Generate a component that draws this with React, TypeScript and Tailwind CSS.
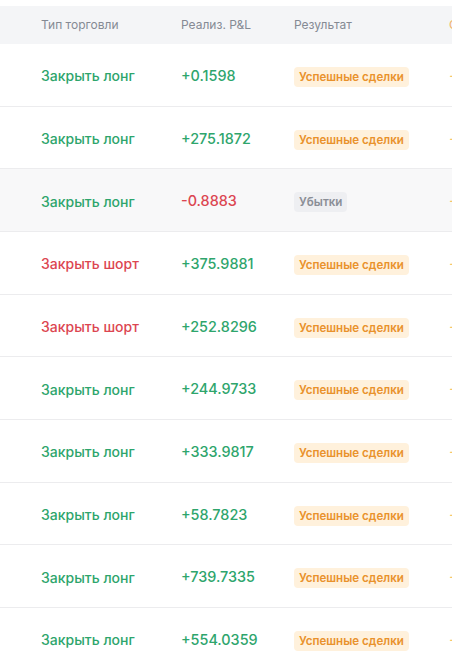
const rows = [
  { type: 'Закрыть лонг', long: true, pnl: '+0.1598', win: true },
  { type: 'Закрыть лонг', long: true, pnl: '+275.1872', win: true },
  { type: 'Закрыть лонг', long: true, pnl: '-0.8883', win: false },
  { type: 'Закрыть шорт', long: false, pnl: '+375.9881', win: true },
  { type: 'Закрыть шорт', long: false, pnl: '+252.8296', win: true },
  { type: 'Закрыть лонг', long: true, pnl: '+244.9733', win: true },
  { type: 'Закрыть лонг', long: true, pnl: '+333.9817', win: true },
  { type: 'Закрыть лонг', long: true, pnl: '+58.7823', win: true },
  { type: 'Закрыть лонг', long: true, pnl: '+739.7335', win: true },
  { type: 'Закрыть лонг', long: true, pnl: '+554.0359', win: true },
]

const font = { fontFamily: 'Inter, "Noto Sans", sans-serif' }

export default function App() {
  return (
    <div className="h-[665px] w-[452px] overflow-hidden bg-white pt-[6px]" style={font}>
      <div className="grid h-[38px] grid-cols-[41px_140px_113px_155px_80px] items-center bg-[#f4f5f7] text-[12px] text-[#858a94]">
        <div />
        <div>Тип торговли</div>
        <div>Реализ. P&amp;L</div>
        <div>Результат</div>
        <div className="text-[#f0b46a]">Сделка</div>
      </div>

      {rows.map((r, i) => (
        <div
          key={i}
          className={`grid h-[62.67px] grid-cols-[41px_140px_113px_155px_80px] items-center border-b border-[#ececee] pt-[2px] text-[14px] font-medium ${
            r.win ? 'bg-white' : 'bg-[#f8f8f9]'
          }`}
        >
          <div />
          <div className={r.long ? 'text-[#2ea56c]' : 'text-[#dc4651]'}>{r.type}</div>
          <div className={`text-[14.4px] ${r.pnl.startsWith('-') ? 'text-[#dc4651]' : 'text-[#2ea56c]'}`}>{r.pnl}</div>
          <div>
            {r.win ? (
              <span className="rounded-[4px] bg-[#fff1dc] px-[5px] py-[3px] text-[11.6px] font-semibold text-[#e9922c]">
                Успешные сделки
              </span>
            ) : (
              <span className="rounded-[4px] bg-[#eeeff2] px-[5px] py-[3px] text-[11.6px] font-semibold text-[#8a8e96]">
                Убытки
              </span>
            )}
          </div>
          <div className="text-[13px] text-[#f5c66a]">+</div>
        </div>
      ))}
    </div>
  )
}
